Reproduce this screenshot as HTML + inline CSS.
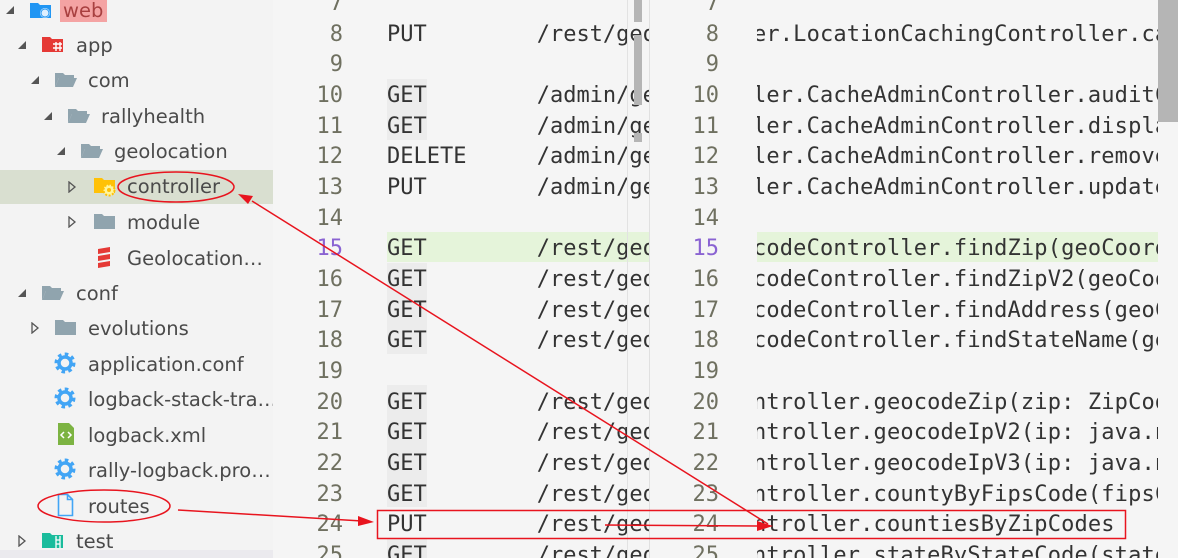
<!DOCTYPE html>
<html><head><meta charset="utf-8"><style>
html,body{margin:0;padding:0;overflow:hidden}
body{width:1178px;height:558px;overflow:hidden;position:relative;background:#f5f5f5;font-family:"DejaVu Sans","Liberation Sans",sans-serif}
.side{position:absolute;left:0;top:0;width:273px;height:558px;background:#f3f3f3;overflow:hidden}
.row{position:absolute;left:0;width:273px;height:35px}
.row .t{position:absolute;top:-1px;font-size:19.5px;color:#4a4a4a;white-space:nowrap;line-height:24px}
.row svg{position:absolute}
.code{position:absolute;font-family:"DejaVu Sans Mono","Liberation Mono",monospace;font-size:22px;line-height:30.65px;color:#333;white-space:pre}
.num{position:absolute;font-family:"DejaVu Sans Mono","Liberation Mono",monospace;font-size:22px;line-height:30.65px;color:#6f7060;text-align:right;white-space:pre}
.clipL{position:absolute;left:280px;top:0;width:370px;height:558px;overflow:hidden}
.clipR{position:absolute;left:757px;top:0;width:401px;height:558px;overflow:hidden}
.p{margin-left:4px}
</style></head><body>
<div class="side">
 <div class="row" style="top:0">
  <svg style="left:6px;top:5px" width="10" height="10"><polygon points="8,1 8,9 0,9" fill="#555"/></svg>
  <svg style="left:29px;top:0px" width="24" height="20"><path d="M1 3h8l2 2h11v13H1z" fill="#2196f3"/><circle cx="16" cy="13" r="5" fill="#fff" opacity=".85"/><circle cx="16" cy="13" r="4" fill="none" stroke="#2196f3"/></svg>
  <div style="position:absolute;left:60px;top:0;width:47px;height:22px;background:#f4a3a3"></div>
  <span class="t" style="left:63px;top:-1px;color:#a84040">web</span>
 </div>
 <div class="row" style="top:35px">
  <svg style="left:18px;top:5px" width="10" height="10"><polygon points="8,1 8,9 0,9" fill="#555"/></svg>
  <svg style="left:41px;top:0px" width="24" height="20"><path d="M1 2h8l2 2h11v13H1z" fill="#e53935"/><path d="M12 9h9M12 13h9M15 7v9M19 7v9" stroke="#fff" stroke-width="1.4"/></svg>
  <span class="t" style="left:76px">app</span>
 </div>
 <div class="row" style="top:70px">
  <svg style="left:31px;top:5px" width="10" height="10"><polygon points="8,1 8,9 0,9" fill="#555"/></svg>
  <svg style="left:54px;top:0px" width="24" height="20"><path d="M1 3h8l2 2h9v3H5L1 17z" fill="#90a4ae"/><path d="M5 8h18l-4 9H1z" fill="#90a4ae"/></svg>
  <span class="t" style="left:88px">com</span>
 </div>
 <div class="row" style="top:106px">
  <svg style="left:44px;top:5px" width="10" height="10"><polygon points="8,1 8,9 0,9" fill="#555"/></svg>
  <svg style="left:67px;top:0px" width="24" height="20"><path d="M1 3h8l2 2h9v3H5L1 17z" fill="#90a4ae"/><path d="M5 8h18l-4 9H1z" fill="#90a4ae"/></svg>
  <span class="t" style="left:101px">rallyhealth</span>
 </div>
 <div class="row" style="top:141px">
  <svg style="left:57px;top:5px" width="10" height="10"><polygon points="8,1 8,9 0,9" fill="#555"/></svg>
  <svg style="left:80px;top:0px" width="24" height="20"><path d="M1 3h8l2 2h9v3H5L1 17z" fill="#90a4ae"/><path d="M5 8h18l-4 9H1z" fill="#90a4ae"/></svg>
  <span class="t" style="left:114px">geolocation</span>
 </div>
 <div class="row" style="top:170px;height:34px;background:#d9dfd0">
  <svg style="left:68px;top:11px" width="10" height="12"><polygon points="1,1 7,6 1,11" fill="none" stroke="#555" stroke-width="1.3"/></svg>
  <svg style="left:93px;top:6px" width="24" height="22"><path d="M1 2h8l2 2h11v13H1z" fill="#ffc107"/><circle cx="16" cy="14" r="5.5" fill="#fff59d" stroke="#ffc107" stroke-width="2" stroke-dasharray="2 1.5"/><circle cx="16" cy="14" r="2" fill="#ffc107"/></svg>
  <span class="t" style="left:127px;top:5px">controller</span>
 </div>
 <div class="row" style="top:212px">
  <svg style="left:68px;top:4px" width="10" height="12"><polygon points="1,1 7,6 1,11" fill="none" stroke="#555" stroke-width="1.3"/></svg>
  <svg style="left:93px;top:0px" width="24" height="20"><path d="M1 2h8l2 2h11v13H1z" fill="#90a4ae"/></svg>
  <span class="t" style="left:127px">module</span>
 </div>
 <div class="row" style="top:248px">
  <svg style="left:96px;top:-2px" width="16" height="24"><path d="M2 3l12-2v5L2 8zM2 10l12-2v5L2 15zM2 17l12-2v5L2 22z" fill="#e53935"/></svg>
  <span class="t" style="left:127px">Geolocation…</span>
 </div>
 <div class="row" style="top:283px">
  <svg style="left:18px;top:5px" width="10" height="10"><polygon points="8,1 8,9 0,9" fill="#555"/></svg>
  <svg style="left:41px;top:0px" width="24" height="20"><path d="M1 3h8l2 2h9v3H5L1 17z" fill="#90a4ae"/><path d="M5 8h18l-4 9H1z" fill="#90a4ae"/></svg>
  <span class="t" style="left:76px">conf</span>
 </div>
 <div class="row" style="top:318px">
  <svg style="left:31px;top:4px" width="10" height="12"><polygon points="1,1 7,6 1,11" fill="none" stroke="#555" stroke-width="1.3"/></svg>
  <svg style="left:54px;top:0px" width="24" height="20"><path d="M1 2h8l2 2h11v13H1z" fill="#90a4ae"/></svg>
  <span class="t" style="left:88px">evolutions</span>
 </div>
 <div class="row" style="top:354px">
  <svg style="left:54px;top:-2px" width="22" height="22"><circle cx="11" cy="11" r="8" fill="none" stroke="#42a5f5" stroke-width="5" stroke-dasharray="3.2 3"/><circle cx="11" cy="11" r="6" fill="none" stroke="#42a5f5" stroke-width="3.5"/></svg>
  <span class="t" style="left:88px">application.conf</span>
 </div>
 <div class="row" style="top:389px">
  <svg style="left:54px;top:-2px" width="22" height="22"><circle cx="11" cy="11" r="8" fill="none" stroke="#42a5f5" stroke-width="5" stroke-dasharray="3.2 3"/><circle cx="11" cy="11" r="6" fill="none" stroke="#42a5f5" stroke-width="3.5"/></svg>
  <span class="t" style="left:88px">logback-stack-tra…</span>
 </div>
 <div class="row" style="top:425px">
  <svg style="left:57px;top:-3px" width="18" height="24"><path d="M1 1h11l5 5v17H1z" fill="#7cb342"/><path d="M7 10l-3 3 3 3M11 10l3 3-3 3" stroke="#fff" stroke-width="1.5" fill="none"/></svg>
  <span class="t" style="left:88px">logback.xml</span>
 </div>
 <div class="row" style="top:460px">
  <svg style="left:54px;top:-2px" width="22" height="22"><circle cx="11" cy="11" r="8" fill="none" stroke="#42a5f5" stroke-width="5" stroke-dasharray="3.2 3"/><circle cx="11" cy="11" r="6" fill="none" stroke="#42a5f5" stroke-width="3.5"/></svg>
  <span class="t" style="left:88px">rally-logback.pro…</span>
 </div>
 <div class="row" style="top:496px">
  <svg style="left:57px;top:-3px" width="18" height="24"><path d="M1.5 1.5h9l5 5v16h-14z M10.5 1.5v5h5" fill="none" stroke="#42a5f5" stroke-width="1.6"/></svg>
  <span class="t" style="left:88px">routes</span>
 </div>
 <div class="row" style="top:531px">
  <svg style="left:18px;top:4px" width="10" height="12"><polygon points="1,1 7,6 1,11" fill="none" stroke="#555" stroke-width="1.3"/></svg>
  <svg style="left:41px;top:0px" width="24" height="20"><path d="M1 2h8l2 2h11v13H1z" fill="#1abc9c"/><path d="M15 5v12M19 5v12M15 9h4M15 13h4" stroke="#fff" stroke-width="1.3"/></svg>
  <span class="t" style="left:76px">test</span>
 </div>
 <div style="position:absolute;left:0;top:550px;width:273px;height:8px;background:#ebeaee"></div>
</div>

<div class="clipL">
 <div style="position:absolute;left:107px;top:232px;width:270px;height:30px;background:#e5f4da"></div>
 <div style="position:absolute;left:107px;top:79px;width:40px;height:61px;background:#ececec"></div>
 <div style="position:absolute;left:107px;top:385px;width:40px;height:122px;background:#ececec"></div>
 <div style="position:absolute;left:107px;top:263px;width:40px;height:91px;background:#ececec"></div>
 <div style="position:absolute;left:107px;top:538px;width:40px;height:20px;background:#ececec"></div>
 <div class="num" style="left:0;width:63px;top:-11px">7
8
9
10
11
12
13
14
<span style="color:#8a63d2">15</span>
16
17
18
19
20
21
22
23
24
25</div>
 <div class="code" style="left:107px;top:-11px">
PUT        <span class="p">/rest/geocode</span>

GET        <span class="p">/admin/geocode</span>
GET        <span class="p">/admin/geocode</span>
DELETE     <span class="p">/admin/geocode</span>
PUT        <span class="p">/admin/geocode</span>

GET        <span class="p">/rest/geocode</span>
GET        <span class="p">/rest/geocode</span>
GET        <span class="p">/rest/geocode</span>
GET        <span class="p">/rest/geocode</span>

GET        <span class="p">/rest/geocode</span>
GET        <span class="p">/rest/geocode</span>
GET        <span class="p">/rest/geocode</span>
GET        <span class="p">/rest/geocode</span>
PUT        <span class="p">/rest/geocode</span>
GET        <span class="p">/rest/geocode</span></div>
 <div style="position:absolute;left:347px;top:0;width:1px;height:558px;background:#e2e2e2"></div>
 <div style="position:absolute;left:354px;top:0;width:8px;height:22px;background:#b5b5b5"></div>
 <div style="position:absolute;left:354px;top:35px;width:8px;height:70px;background:#b5b5b5"></div>
 <div style="position:absolute;left:354px;top:133px;width:8px;height:9px;background:#b5b5b5"></div>
</div>
<div style="position:absolute;left:649px;top:0;width:1px;height:558px;background:#e0e0e0"></div>

<div class="num" style="left:650px;width:69px;top:-11px">7
8
9
10
11
12
13
14
<span style="color:#8a63d2">15</span>
16
17
18
19
20
21
22
23
24
25</div>
<div class="clipR">
 <div style="position:absolute;left:0;top:232px;width:401px;height:30px;background:#e5f4da"></div>
 <div class="code" style="left:-4px;top:-11px;letter-spacing:0.15px">
er.LocationCachingController.cacheZip

ler.CacheAdminController.auditCache
ler.CacheAdminController.displayCache
ler.CacheAdminController.removeCache
ler.CacheAdminController.updateCache

codeController.findZip(geoCoords
codeController.findZipV2(geoCoords
codeController.findAddress(geoCoords
codeController.findStateName(geoCoords

ntroller.geocodeZip(zip: ZipCode
ntroller.geocodeIpV2(ip: java.net
ntroller.geocodeIpV3(ip: java.net
ntroller.countyByFipsCode(fipsCode
ntroller.countiesByZipCodes
ntroller.stateByStateCode(stateP</div>
</div>
<div style="position:absolute;left:1158px;top:0;width:20px;height:122px;background:#b5b5b5"></div>

<svg style="position:absolute;left:0;top:0" width="1178" height="558">
 <g fill="none" stroke="#e8141e" stroke-width="1.5">
  <ellipse cx="176" cy="187" rx="58" ry="15"/>
  <ellipse cx="104" cy="506" rx="66" ry="16"/>
  <rect x="377.5" y="510.5" width="748" height="28"/>
  <line x1="178" y1="510" x2="362" y2="521"/>
  <line x1="605" y1="525" x2="758" y2="526"/>
  <line x1="768" y1="524" x2="252" y2="201"/>
 </g>
 <g fill="#e8141e">
  <polygon points="374,522 358,516 358,526"/>
  <polygon points="773,526 757,521 757,531"/>
  <polygon points="238,194 253,196 248,204"/>
 </g>
</svg>
</body></html>
